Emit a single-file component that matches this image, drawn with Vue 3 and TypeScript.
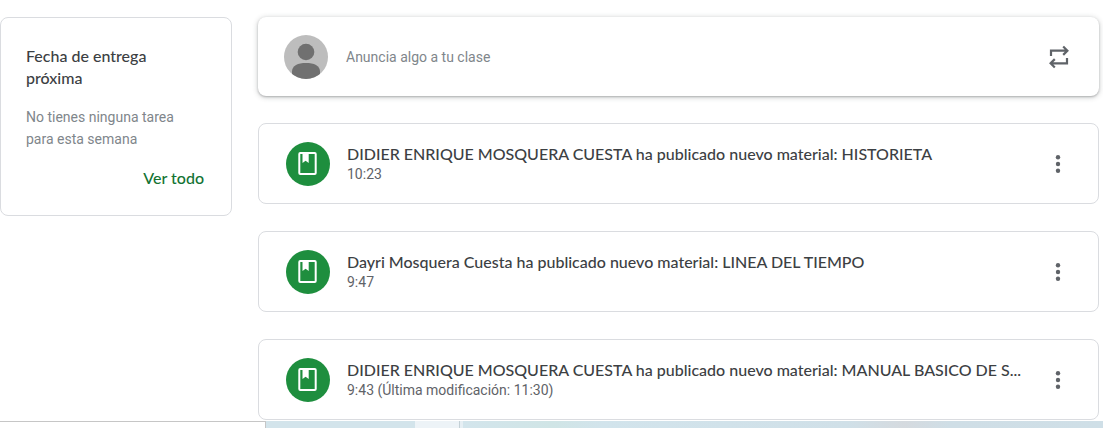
<script setup lang="ts">
interface Post {
  id: number
  title: string
  time: string
}

const posts: Post[] = [
  { id: 1, title: 'DIDIER ENRIQUE MOSQUERA CUESTA ha publicado nuevo material: HISTORIETA', time: '10:23' },
  { id: 2, title: 'Dayri Mosquera Cuesta ha publicado nuevo material: LINEA DEL TIEMPO', time: '9:47' },
  { id: 3, title: 'DIDIER ENRIQUE MOSQUERA CUESTA ha publicado nuevo material: MANUAL BASICO DE S...', time: '9:43 (Última modificación: 11:30)' },
]
</script>

<template>
  <div class="page">
    <div class="content">
      <aside class="upcoming">
        <h2 class="upcoming-title">Fecha de entrega próxima</h2>
        <p class="upcoming-text">No tienes ninguna tarea para esta semana</p>
        <a class="upcoming-link" href="#todo">Ver todo</a>
      </aside>

      <main class="stream">
        <section class="composer">
          <button class="announce" type="button">
            <svg class="avatar" viewBox="0 0 44 44" aria-hidden="true">
              <defs>
                <clipPath id="avatar-clip"><circle cx="22" cy="22" r="22" /></clipPath>
              </defs>
              <g clip-path="url(#avatar-clip)">
                <rect width="44" height="44" fill="#bdbdbd" />
                <circle cx="22" cy="17" r="8.3" fill="#707070" />
                <path d="M8 44V36.5C8 30.500 14 28 22 28S36 30.500 36 36.500V44Z" fill="#707070" />
              </g>
            </svg>
            <span>Anuncia algo a tu clase</span>
          </button>
          <button class="icon-button" type="button" aria-label="Reutilizar publicación">
            <svg class="icon" viewBox="0 0 24 24" aria-hidden="true">
              <path
                d="M4 11V5.700H19.500M16.200 1.500L20.400 5.700L16.200 9.900M20 13V18.300H4.500M7.800 14.100L3.600 18.300L7.800 22.500"
                fill="none" stroke="#5f6368" stroke-width="2.200" />
            </svg>
          </button>
        </section>

        <article v-for="post in posts" :key="post.id" class="post">
          <svg class="badge" viewBox="0 0 44 44" aria-hidden="true">
            <circle cx="22" cy="22" r="22" fill="#1e8e3e" />
            <path
              fill="#fff" fill-rule="evenodd"
              d="M14.300 10H28.700A2 2 0 0 1 30.700 12V31A2 2 0 0 1 28.700 33H14.300A2 2 0 0 1 12.300 31V12A2 2 0 0 1 14.300 10ZM14.300 12V31H28.700V12H22.700V21L19.600 18.800L16.500 21V12Z" />
          </svg>
          <div class="post-text">
            <h3 class="post-title">{{ post.title }}</h3>
            <p class="post-time">{{ post.time }}</p>
          </div>
          <button class="icon-button" type="button" aria-label="Más opciones">
            <svg class="icon" viewBox="0 0 24 24" aria-hidden="true">
              <g fill="#5f6368">
                <circle cx="12" cy="5.300" r="2.200" />
                <circle cx="12" cy="12" r="2.200" />
                <circle cx="12" cy="18.700" r="2.200" />
              </g>
            </svg>
          </button>
        </article>
      </main>
    </div>

    <footer class="strip">
      <div class="strip-status"></div>
      <div class="strip-gap"></div>
      <div class="strip-tab"></div>
      <div class="strip-edge"></div>
      <div class="strip-rest"></div>
    </footer>
  </div>
</template>

<style>
body {
  margin: 0;
  background: #fff;
}
</style>

<style scoped>
.page {
  display: flex;
  flex-direction: column;
  min-height: 100vh;
  font-family: Roboto, "Liberation Sans", sans-serif;
  color: #3c4043;
}

h2,
h3,
p {
  margin: 0;
}

button {
  padding: 0;
  border: 0;
  background: none;
  font: inherit;
  cursor: pointer;
}

.content {
  display: flex;
  align-items: flex-start;
  flex: 1;
  gap: 26px;
  padding: 17px 4px 1px 0;
}

.upcoming {
  box-sizing: border-box;
  display: flex;
  flex-direction: column;
  width: 232px;
  padding: 27px 27px 26px 25px;
  border: 1px solid #dadce0;
  border-radius: 8px;
}

.upcoming-title {
  font: 500 16px/22px "Google Sans", Lato, sans-serif;
}

.upcoming-text {
  margin-top: 17px;
  font-size: 14px;
  line-height: 22px;
  color: #80868b;
}

.upcoming-link {
  align-self: flex-end;
  margin-top: 17px;
  font: 500 16px/22px "Google Sans", Lato, sans-serif;
  color: #137333;
  text-decoration: none;
}

.stream {
  display: flex;
  flex-direction: column;
  flex: 1;
  gap: 27px;
  min-width: 0;
}

.composer,
.post {
  box-sizing: border-box;
  display: flex;
  align-items: center;
  border-radius: 8px;
}

.composer {
  height: 79px;
  padding: 0 28px 0 26px;
  box-shadow: 0 1px 2px rgba(60, 64, 67, 0.3), 0 1px 5px 1px rgba(60, 64, 67, 0.2);
}

.announce {
  display: flex;
  align-items: center;
  flex: 1;
  gap: 18px;
  font-size: 14px;
  color: #80868b;
}

.avatar,
.badge {
  display: block;
  flex: none;
  width: 44px;
  height: 44px;
}

.icon-button {
  flex: none;
}

.icon {
  display: block;
  width: 24px;
  height: 24px;
}

.post {
  height: 81px;
  padding: 0 28px 0 27px;
  border: 1px solid #dadce0;
}

.post-text {
  flex: 1;
  min-width: 0;
  padding: 0 22px 0 17px;
}

.post-title {
  overflow: hidden;
  font: 500 16px/20px "Google Sans", Lato, sans-serif;
  text-overflow: ellipsis;
  white-space: nowrap;
}

.post-time {
  font-size: 14px;
  line-height: 20px;
  color: #5f6368;
}

.strip {
  display: flex;
  height: 7px;
}

.strip-status {
  box-sizing: border-box;
  width: 266px;
  border: solid #c6c6c6;
  border-width: 1px 1px 0 0;
}

.strip-gap {
  width: 149px;
  background: #d3e4eb;
}

.strip-tab {
  width: 44px;
  border-right: 1px solid #c3d0d6;
  background: #edf3f7;
}

.strip-edge {
  width: 3px;
  background: #e6eff4;
}

.strip-rest {
  flex: 1;
  background: linear-gradient(90deg, #d3e5ec 0%, #d0e5e6 14%, #d2e4ec 22%, #d0e0e8 60%, #d5dadf 69%, #cfdee6 76%, #cfdfe7 100%);
}
</style>
